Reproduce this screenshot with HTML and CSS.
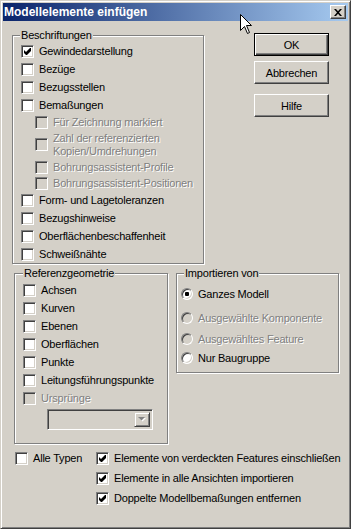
FILE: index.html
```html
<!DOCTYPE html>
<html lang="de">
<head>
    <meta charset="UTF-8">
    <title>Modellelemente einfügen</title>
    <link rel="stylesheet" href="styles.css">
</head>
<body>

    <div class="window">

        <div class="titlebar">
            <span class="title">Modellelemente einfügen</span>
            <span class="close-btn">
                <svg width="8" height="7" viewBox="0 0 8 7"><path d="M0 0h2l2 2.2L6 0h2L5 3.5 8 7H6L4 4.8 2 7H0l3-3.5z" fill="#000"/></svg>
            </span>
        </div>

        <div class="dialog">

            <div class="top-row">
                <fieldset class="group group-labels">
                    <legend>Beschriftungen</legend>
                    <div class="check"><span class="box"><svg class="tick" viewBox="0 0 7 7"><polygon points="0,2 2,4 6,0 7,0 7,3 3,7 2,7 0,5"/></svg></span>Gewindedarstellung</div>
                    <div class="check"><span class="box"></span>Bezüge</div>
                    <div class="check"><span class="box"></span>Bezugsstellen</div>
                    <div class="check"><span class="box"></span>Bemaßungen</div>
                    <div class="check sub disabled"><span class="box"></span>Für Zeichnung markiert</div>
                    <div class="check sub two-line disabled"><span class="box"></span><span>Zahl der referenzierten<br>Kopien/Umdrehungen</span></div>
                    <div class="check sub disabled"><span class="box"></span>Bohrungsassistent-Profile</div>
                    <div class="check sub disabled"><span class="box"></span>Bohrungsassistent-Positionen</div>
                    <div class="check"><span class="box"></span>Form- und Lagetoleranzen</div>
                    <div class="check"><span class="box"></span>Bezugshinweise</div>
                    <div class="check"><span class="box"></span>Oberflächenbeschaffenheit</div>
                    <div class="check"><span class="box"></span>Schweißnähte</div>
                </fieldset>

                <div class="buttons">
                    <button class="btn btn-default">OK</button>
                    <button class="btn">Abbrechen</button>
                    <button class="btn btn-help">Hilfe</button>
                </div>
            </div>

            <div class="mid-row">
                <fieldset class="group group-geometry">
                    <legend>Referenzgeometrie</legend>
                    <div class="check"><span class="box"></span>Achsen</div>
                    <div class="check"><span class="box"></span>Kurven</div>
                    <div class="check"><span class="box"></span>Ebenen</div>
                    <div class="check"><span class="box"></span>Oberflächen</div>
                    <div class="check"><span class="box"></span>Punkte</div>
                    <div class="check"><span class="box"></span>Leitungsführungspunkte</div>
                    <div class="check disabled"><span class="box"></span>Ursprünge</div>
                    <div class="combo">
                        <span class="combo-btn">
                            <svg width="8" height="5" viewBox="0 0 8 5"><path d="M1 1h7L4.5 4.5z" fill="#fff"/><path d="M0 0h7L3.5 3.5z" fill="#808080"/></svg>
                        </span>
                    </div>
                </fieldset>

                <fieldset class="group group-import">
                    <legend>Importieren von</legend>
                    <div class="radio"><span class="dot on"></span>Ganzes Modell</div>
                    <div class="radio disabled"><span class="dot"></span>Ausgewählte Komponente</div>
                    <div class="radio disabled"><span class="dot"></span>Ausgewähltes Feature</div>
                    <div class="radio"><span class="dot"></span>Nur Baugruppe</div>
                </fieldset>
            </div>

            <div class="bottom-row">
                <div class="check all-types"><span class="box"></span>Alle Typen</div>
                <div class="options">
                    <div class="check"><span class="box"><svg class="tick" viewBox="0 0 7 7"><polygon points="0,2 2,4 6,0 7,0 7,3 3,7 2,7 0,5"/></svg></span>Elemente von verdeckten Features einschließen</div>
                    <div class="check"><span class="box"><svg class="tick" viewBox="0 0 7 7"><polygon points="0,2 2,4 6,0 7,0 7,3 3,7 2,7 0,5"/></svg></span>Elemente in alle Ansichten importieren</div>
                    <div class="check"><span class="box"><svg class="tick" viewBox="0 0 7 7"><polygon points="0,2 2,4 6,0 7,0 7,3 3,7 2,7 0,5"/></svg></span>Doppelte Modellbemaßungen entfernen</div>
                </div>
            </div>

        </div>

        <!-- mouse pointer over the title bar -->
        <svg class="cursor" width="13" height="21" viewBox="0 0 13 21">
            <path d="M0.5 0.5V16.5L4.5 12.5L7.5 19.5L9.5 18.5L6.5 11.5H11.5Z" fill="#fff" stroke="#000"/>
        </svg>
    </div>

</body>
</html>
```

FILE: styles.css
```css
* {
    box-sizing: border-box;
}

body {
    margin: 0;
    background-color: #d4d0c8;
    font-family: "Liberation Sans", Arial, sans-serif;
    font-size: 11px;
    letter-spacing: -0.2px;
    color: #000;
}

.window {
    position: relative;
    width: 351px;
    height: 529px;
    padding: 2px;
    background-color: #d4d0c8;
    border: 1px solid;
    border-color: #d4d0c8 #404040 #404040 #d4d0c8;
    box-shadow: inset 1px 1px #fff, inset -1px -1px #808080;
}

/* title bar */
.titlebar {
    height: 18px;
    display: flex;
    align-items: center;
    justify-content: space-between;
    padding: 0 2px 0 1px;
    background: linear-gradient(to right, #0a246a, #a6caf0);
}

.title {
    color: #fff;
    font-weight: bold;
    font-size: 12px;
    letter-spacing: 0;
}

.close-btn {
    width: 16px;
    height: 14px;
    display: flex;
    align-items: center;
    justify-content: center;
    background-color: #d4d0c8;
    border: 1px solid;
    border-color: #fff #404040 #404040 #fff;
    box-shadow: inset -1px -1px #808080;
}

/* group boxes */
.group {
    margin: 0;
    padding: 0 0 0 8px;
    border: 1px solid #808080;
    box-shadow: inset 1px 1px #fff, 1px 1px #fff;
    min-width: 0;
}

.group legend {
    padding: 0 1px;
    line-height: 13px;
    background-color: #d4d0c8;
}

.top-row {
    display: flex;
    align-items: flex-start;
}

.group-labels {
    width: 192px;
    margin: 8px 0 0 9px;
}

.group-labels legend {
    margin-left: -1px;
}

.buttons {
    display: flex;
    flex-direction: column;
    gap: 5px;
    margin: 12px 0 0 50px;
}

.btn {
    width: 75px;
    height: 23px;
    padding: 0;
    font-family: inherit;
    font-size: 11px;
    letter-spacing: inherit;
    color: #000;
    background-color: #d4d0c8;
    border: 1px solid;
    border-color: #fff #404040 #404040 #fff;
    box-shadow: inset -1px -1px #808080;
}

.btn-default {
    border-color: #000;
    box-shadow: inset 1px 1px #fff, inset -1px -1px #404040, inset -2px -2px #808080;
}

.btn-help {
    margin-top: 5px;
}

/* checkboxes */
.check {
    display: flex;
    align-items: center;
    gap: 5px;
    height: 18px;
    white-space: nowrap;
}

.box {
    width: 13px;
    height: 13px;
    flex-shrink: 0;
    display: flex;
    align-items: center;
    justify-content: center;
    background-color: #fff;
    border: 1px solid;
    border-color: #808080 #fff #fff #808080;
    box-shadow: inset 1px 1px #404040, inset -1px -1px #d4d0c8;
}

.tick {
    width: 7px;
    height: 7px;
    fill: #000;
}

.check.sub {
    height: 16px;
    padding-left: 14px;
}

.check.two-line {
    height: 29px;
    line-height: 13px;
}

.disabled {
    color: #808080;
    text-shadow: 1px 1px #fff;
}

.disabled .box {
    background-color: #d4d0c8;
}

/* middle groups */
.mid-row {
    display: flex;
    align-items: flex-start;
    margin-top: 3px;
}

.group-geometry {
    width: 154px;
    margin-left: 11px;
    padding-top: 1px;
    padding-bottom: 13px;
}

.combo {
    width: 106px;
    height: 21px;
    margin: 2px 0 0 24px;
    padding: 2px;
    display: flex;
    justify-content: flex-end;
    border: 1px solid;
    border-color: #808080 #fff #fff #808080;
    box-shadow: inset 1px 1px #404040, inset -1px -1px #d4d0c8;
}

.combo-btn {
    width: 16px;
    height: 15px;
    display: flex;
    align-items: center;
    justify-content: center;
    border: 1px solid;
    border-color: #d4d0c8 #404040 #404040 #d4d0c8;
    box-shadow: inset 1px 1px #fff, inset -1px -1px #808080;
}

.group-import {
    width: 163px;
    margin-left: 8px;
    padding: 6px 0 6px 4px;
}

.group-import legend {
    margin-left: 3px;
}

.radio {
    display: flex;
    align-items: center;
    gap: 5px;
    height: 16px;
}

.radio:nth-of-type(2) {
    margin-top: 8px;
}

.radio:nth-of-type(3) {
    margin-top: 5px;
}

.radio:nth-of-type(4) {
    margin-top: 3px;
}

.dot {
    width: 12px;
    height: 12px;
    flex-shrink: 0;
    display: flex;
    align-items: center;
    justify-content: center;
    border-radius: 50%;
    background-color: #fff;
    border: 1px solid;
    border-color: #808080 #fff #fff #808080;
    box-shadow: inset 1px 1px #404040, inset -1px -1px #d4d0c8;
}

.radio.disabled .dot {
    background-color: #d4d0c8;
}

.dot.on::after {
    content: "";
    width: 4px;
    height: 4px;
    border-radius: 1px;
    background-color: #000;
}

/* bottom options */
.bottom-row {
    display: flex;
    margin: 4px 0 0 12px;
}

.bottom-row .check {
    height: 20px;
}

.all-types {
    width: 81px;
    align-self: flex-start;
}

.options {
    display: flex;
    flex-direction: column;
}

.cursor {
    position: absolute;
    left: 239px;
    top: 13px;
}
```
